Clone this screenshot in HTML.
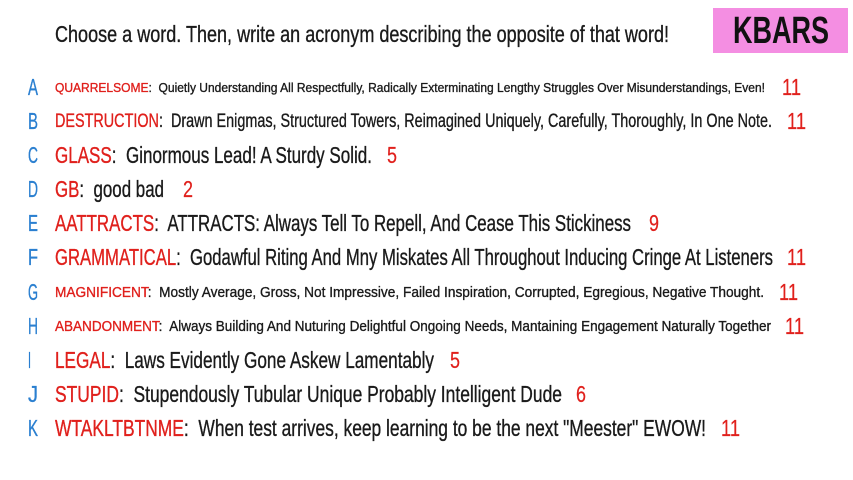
<!DOCTYPE html>
<html><head><meta charset="utf-8">
<style>
html,body{margin:0;padding:0;background:#fff;}
body{width:853px;height:480px;position:relative;overflow:hidden;font-family:"Liberation Sans",sans-serif;color:#1a1a1a;}
.a{position:absolute;white-space:nowrap;transform-origin:0 50%;line-height:1;font-weight:normal;-webkit-text-stroke:0.35px currentColor;}
.L{color:#2a7fd0;}
.r{color:#e0201c;}
.n{color:#e0201c;-webkit-text-stroke:0.2px currentColor;}
#kb{position:absolute;left:713px;top:8px;width:135px;height:45px;background:#f48ee2;}
</style></head><body>
<div id="kb"></div>
<div class="a" data-w="96" data-l="733" data-c="31" style="font-size:38px;color:#111;font-weight:bold;-webkit-text-stroke:0;">KBARS</div>
<div class="a" data-w="614" data-l="55" data-c="34" style="font-size:23px;">Choose a word. Then, write an acronym describing the opposite of that word!</div>

<div id="rows"></div>
<script>
var rows=[
["A","QUARRELSOME","Quietly Understanding All Respectfully, Radically Exterminating Lengthy Struggles Over Misunderstandings, Even!","11",87,13,765,782,23],
["B","DESTRUCTION","Drawn Enigmas, Structured Towers, Reimagined Uniquely, Carefully, Thoroughly, In One Note.","11",121,19,772,787,23],
["C","GLASS","Ginormous Lead! A Sturdy Solid.","5",155,23,372,387,23],
["D","GB","good bad","2",189,23,164,183,23],
["E","AATTRACTS","ATTRACTS: Always Tell To Repell, And Cease This Stickiness","9",223,23,631,649,23],
["F","GRAMMATICAL","Godawful Riting And Mny Miskates All Throughout Inducing Cringe At Listeners","11",257,23,773,787,23],
["G","MAGNIFICENT","Mostly Average, Gross, Not Impressive, Failed Inspiration, Corrupted, Egregious, Negative Thought.","11",292,15,764,779,23],
["H","ABANDONMENT","Always Building And Nuturing Delightful Ongoing Needs, Mantaining Engagement Naturally Together","11",326,15,771,785,23],
["I","LEGAL","Laws Evidently Gone Askew Lamentably","5",360,23,434,450,23],
["J","STUPID","Stupendously Tubular Unique Probably Intelligent Dude","6",394,23,562,576,23],
["K","WTAKLTBTNME","When test arrives, keep learning to be the next \"Meester\" EWOW!","11",428,23,706,721,23]
];
var h="";
rows.forEach(function(r){
 var lw = r[0]=="I"?3:10;
 h+='<div class="a L" data-l="28" data-c="'+r[4]+'" data-w="'+lw+'" style="font-size:23px">'+r[0]+'</div>';
 h+='<div class="a" data-l="55" data-c="'+r[4]+'" data-w="'+(r[6]-55)+'" style="font-size:'+r[5]+'px"><span class="r">'+r[1]+'</span>:&nbsp; '+r[2].replace(/"/g,'&quot;')+'</div>';
 h+='<div class="a n" data-l="'+r[7]+'" data-c="'+r[4]+'" data-w="'+(r[3].length==2?19:10)+'" style="font-size:'+r[8]+'px">'+r[3]+'</div>';
});
document.getElementById("rows").innerHTML=h;
document.querySelectorAll(".a").forEach(function(e){
 var b=e.getBoundingClientRect();
 var tw=+e.dataset.w;
 e.style.left=e.dataset.l+"px";
 e.style.top=(+e.dataset.c-b.height/2)+"px";
 e.style.transform="scaleX("+(tw/b.width)+")";
});
</script>
</body></html>
